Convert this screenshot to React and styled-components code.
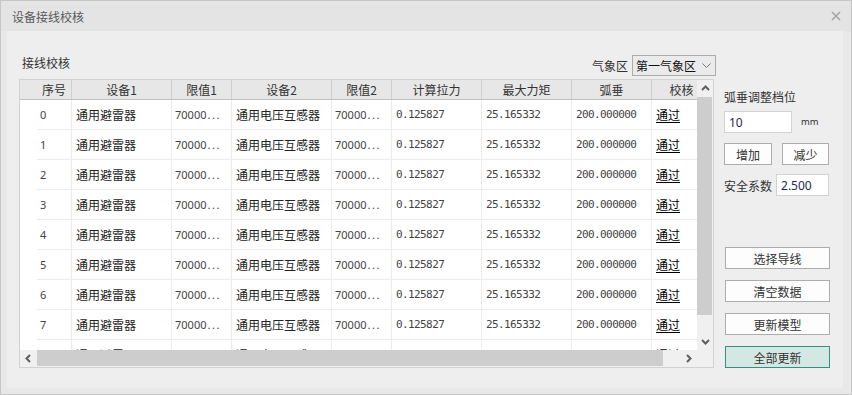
import React from "react";
import styled, { createGlobalStyle } from "styled-components";

const GlobalStyle = createGlobalStyle`
  html, body {
    margin: 0;
    padding: 0;
    background: #ffffff;
  }
  body {
    font-family: "Noto Sans CJK SC", "Noto Sans", sans-serif;
    font-size: 12px;
    color: #333;
  }
  * {
    box-sizing: border-box;
  }
`;

// rowheader, 序号, 设备1, 限值1, 设备2, 限值2, 计算拉力, 最大力矩, 弧垂, 校核
const COLUMNS = "17px 35px 100px 60px 100px 60px 90px 90px 80px 60px";

const HEADERS = ["设备1", "限值1", "设备2", "限值2", "计算拉力", "最大力矩", "弧垂", "校核"];

const ROWS = Array.from({ length: 9 }, (_, i) => ({
  id: i,
  device1: "通用避雷器",
  limit1: "70000",
  device2: "通用电压互感器",
  limit2: "70000",
  tension: "0.125827",
  moment: "25.165332",
  sag: "200.000000",
  check: "通过",
}));

function Chevron({ dir }) {
  const pts = {
    up: "1,6 4.5,2.5 8,6",
    down: "1,3 4.5,6.5 8,3",
    left: "6,1 2.5,4.5 6,8",
    right: "3,1 6.5,4.5 3,8",
  }[dir];
  return (
    <svg width="9" height="9" viewBox="0 0 9 9">
      <polyline points={pts} fill="none" stroke="#5f5f5f" strokeWidth="2" />
    </svg>
  );
}

function App() {
  return (
    <>
      <GlobalStyle />
      <Window>
        <TitleBar>
          <TitleText>设备接线校核</TitleText>
          <svg width="10" height="10" viewBox="0 0 10 10">
            <path d="M1 1 L9 9 M9 1 L1 9" stroke="#a5a5a5" strokeWidth="1.6" />
          </svg>
        </TitleBar>
        <Frame>
          <Panel>
            <LeftColumn>
              <TopRow>
                <SectionLabel>接线校核</SectionLabel>
                <ZoneGroup>
                  <span>气象区</span>
                  <Select>
                    <span>第一气象区</span>
                    <svg width="9" height="6" viewBox="0 0 9 6">
                      <polyline points="0.5,0.5 4.5,4.5 8.5,0.5" fill="none" stroke="#777" strokeWidth="1" />
                    </svg>
                  </Select>
                </ZoneGroup>
              </TopRow>
              <Table>
                <Viewport>
                  <HeaderRow>
                    <HeaderCell $first>序号</HeaderCell>
                    {HEADERS.map((h) => (
                      <HeaderCell key={h}>{h}</HeaderCell>
                    ))}
                  </HeaderRow>
                  {ROWS.map((r) => (
                    <Row key={r.id}>
                      <Cell $plain />
                      <Cell $small>{r.id}</Cell>
                      <Cell>{r.device1}</Cell>
                      <Cell $small>
                        {r.limit1}
                        <Dots>...</Dots>
                      </Cell>
                      <Cell>{r.device2}</Cell>
                      <Cell $small>
                        {r.limit2}
                        <Dots>...</Dots>
                      </Cell>
                      <Cell $mono>{r.tension}</Cell>
                      <Cell $mono>{r.moment}</Cell>
                      <Cell $mono>{r.sag}</Cell>
                      <Cell>
                        <Passed>{r.check}</Passed>
                      </Cell>
                    </Row>
                  ))}
                </Viewport>
                <VScroll>
                  <ArrowBox $h={17}>
                    <Chevron dir="up" />
                  </ArrowBox>
                  <VThumb />
                  <Track />
                  <ArrowBox $h={18}>
                    <Chevron dir="down" />
                  </ArrowBox>
                </VScroll>
                <HScroll>
                  <ArrowBox $w={17}>
                    <Chevron dir="left" />
                  </ArrowBox>
                  <HThumb />
                  <Track />
                  <ArrowBox $w={17}>
                    <Chevron dir="right" />
                  </ArrowBox>
                </HScroll>
                <Corner />
              </Table>
            </LeftColumn>
            <RightColumn>
              <SideLabel>弧垂调整档位</SideLabel>
              <InputRow>
                <TextInput $w={68}>10</TextInput>
                <Unit>mm</Unit>
              </InputRow>
              <ButtonRow>
                <Button $w={48}>增加</Button>
                <Button $w={47}>减少</Button>
              </ButtonRow>
              <SafetyRow>
                <span>安全系数</span>
                <TextInput $w={53}>2.500</TextInput>
              </SafetyRow>
              <Actions>
                <Button $w={105}>选择导线</Button>
                <Button $w={105}>清空数据</Button>
                <Button $w={105}>更新模型</Button>
                <Button $w={105} $primary>
                  全部更新
                </Button>
              </Actions>
            </RightColumn>
          </Panel>
        </Frame>
      </Window>
    </>
  );
}

export default App;

const Window = styled.div`
  width: 852px;
  height: 395px;
  border: 1px solid #c6c6c6;
  background: #e8e8e8;
  display: flex;
  flex-direction: column;
`;

const TitleBar = styled.div`
  height: 30px;
  flex-shrink: 0;
  background: #e4e4e4;
  display: flex;
  align-items: center;
  justify-content: space-between;
  padding: 0 10px 0 11px;
`;

const TitleText = styled.span`
  color: #5a5a5a;
  font-size: 12px;
`;

const Frame = styled.div`
  flex: 1;
  display: flex;
  padding: 0 8px 6px 6px;
`;

const Panel = styled.div`
  flex: 1;
  background: #eeeeee;
  display: flex;
  gap: 8px;
  padding: 24px 0 0 12px;
`;

const LeftColumn = styled.div`
  width: 697px;
  display: flex;
  flex-direction: column;
`;

const TopRow = styled.div`
  height: 21px;
  display: flex;
  justify-content: space-between;
`;

const SectionLabel = styled.span`
  margin-left: 3px;
  line-height: 16px;
  color: #333;
`;

const ZoneGroup = styled.div`
  display: flex;
  align-items: center;
  gap: 4px;
  color: #333;
`;

const Select = styled.div`
  width: 84px;
  height: 21px;
  border: 1px solid #acacac;
  background: #ebebeb;
  display: flex;
  align-items: center;
  justify-content: space-between;
  padding: 0 4px 0 3px;
  color: #111;
`;

const Table = styled.div`
  margin-top: 3px;
  width: 695px;
  height: 289px;
  border: 1px solid #d2d2d2;
  background: #ffffff;
  display: grid;
  grid-template-columns: 677px 16px;
  grid-template-rows: 270px 17px;
`;

const Viewport = styled.div`
  overflow: hidden;
`;

const HeaderRow = styled.div`
  display: grid;
  grid-template-columns: ${COLUMNS};
  height: 20px;
  background: #e7e7e7;
  border-bottom: 1px solid #c2c2c2;
`;

const HeaderCell = styled.div`
  grid-column: ${(p) => (p.$first ? "span 2" : "auto")};
  padding-left: ${(p) => (p.$first ? "17px" : "0")};
  border-right: 1px solid #cfcfcf;
  text-align: center;
  line-height: 19px;
  white-space: nowrap;
  overflow: hidden;
  color: #333;
`;

const Row = styled.div`
  display: grid;
  grid-template-columns: ${COLUMNS};
  height: 30px;
`;

const Cell = styled.div`
  display: flex;
  align-items: center;
  padding-left: ${(p) => (p.$small ? "3px" : "4px")};
  border-right: ${(p) => (p.$plain ? "none" : "1px solid #ececec")};
  border-bottom: ${(p) => (p.$plain ? "none" : "1px solid #ececec")};
  white-space: nowrap;
  overflow: hidden;
  color: ${(p) => (p.$mono || p.$small ? "#444" : "#222")};
  font-family: ${(p) =>
    p.$mono
      ? '"DejaVu Sans Mono", "Liberation Mono", monospace'
      : p.$small
      ? '"Noto Sans", sans-serif'
      : '"Noto Sans CJK SC", sans-serif'};
  font-size: ${(p) => (p.$mono ? "11px" : p.$small ? "11px" : "12px")};
  letter-spacing: ${(p) => (p.$mono ? "-0.6px" : "normal")};
`;

const Dots = styled.span`
  letter-spacing: 1.6px;
  margin-left: 1px;
`;

const Passed = styled.span`
  color: #000;
  text-decoration: underline;
  text-underline-offset: 2px;
`;

const VScroll = styled.div`
  background: #f0f0f0;
  display: flex;
  flex-direction: column;
`;

const HScroll = styled.div`
  background: #f0f0f0;
  display: flex;
`;

const Corner = styled.div`
  background: #f0f0f0;
`;

const ArrowBox = styled.div`
  flex-shrink: 0;
  width: ${(p) => (p.$w ? `${p.$w}px` : "100%")};
  height: ${(p) => (p.$h ? `${p.$h}px` : "100%")};
  display: flex;
  align-items: center;
  justify-content: center;
`;

const VThumb = styled.div`
  height: 218px;
  margin-right: 1px;
  background: #cdcdcd;
`;

const HThumb = styled.div`
  width: 626px;
  margin-bottom: 1px;
  background: #cdcdcd;
`;

const Track = styled.div`
  flex: 1;
`;

const RightColumn = styled.div`
  width: 107px;
  display: flex;
  flex-direction: column;
  padding-top: 34px;
  color: #333;
`;

const SideLabel = styled.span`
  line-height: 16px;
`;

const InputRow = styled.div`
  margin-top: 6px;
  display: flex;
  align-items: center;
`;

const TextInput = styled.div`
  width: ${(p) => p.$w}px;
  height: 22px;
  background: #ffffff;
  border: 1px solid #d3d3d3;
  display: flex;
  align-items: center;
  padding-left: 4px;
  font-family: "Noto Sans", sans-serif;
  font-size: 12px;
  color: #1d2a55;
`;

const Unit = styled.span`
  margin-left: 9px;
  font-family: "DejaVu Sans", sans-serif;
  font-size: 9px;
  color: #333;
`;

const ButtonRow = styled.div`
  margin-top: 10px;
  display: flex;
  gap: 10px;
`;

const SafetyRow = styled.div`
  margin-top: 9px;
  display: flex;
  align-items: center;
  gap: 4px;
`;

const Actions = styled.div`
  margin-top: 51px;
  margin-left: 1px;
  display: flex;
  flex-direction: column;
  gap: 11px;
`;

const Button = styled.div`
  width: ${(p) => p.$w}px;
  height: 22px;
  display: flex;
  align-items: center;
  justify-content: center;
  background: ${(p) => (p.$primary ? "#d4e8e3" : "#fdfdfd")};
  border: 1px solid ${(p) => (p.$primary ? "#3b8e7d" : "#adadad")};
  color: #333;
  font-size: 12px;
`;
